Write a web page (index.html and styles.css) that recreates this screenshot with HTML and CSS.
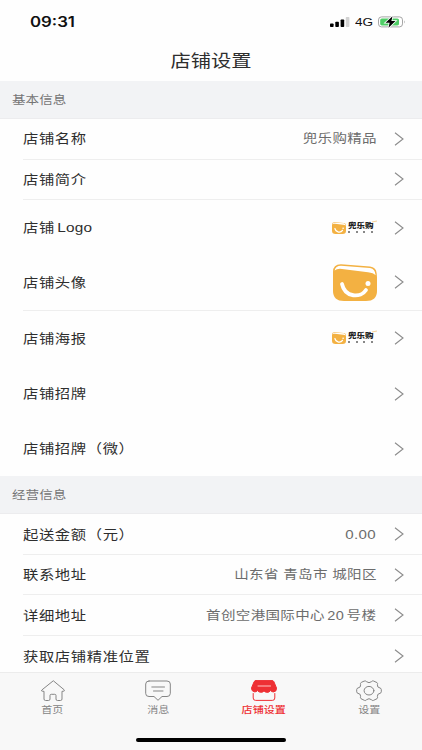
FILE: index.html
```html
<!DOCTYPE html>
<html lang="zh-CN">
<head>
    <meta charset="UTF-8">
    <meta name="viewport" content="width=device-width, initial-scale=1.0">
    <title>店铺设置</title>
    <link rel="stylesheet" href="styles.css">
</head>
<body>
    <!-- 公用图标 -->
    <svg class="defs" width="0" height="0">
        <symbol id="arrow" viewBox="0 0 10 16">
            <path d="M1 1.7 9 8 1 14.3" fill="none" stroke="#8b8b8b" stroke-width="1.1"/>
        </symbol>
        <symbol id="bag" viewBox="0 0 44 37">
            <path d="M8 .3 37 2.6Q43 3.200 43.600 9L44 13V27Q44 37 33 37H11Q0 37 0 27V8Q0 .2 8 .3Z" fill="#f3b142"/>
            <path d="M1.600 6.500Q2.500 1.700 8 1.700L37 3.900Q42.200 4.600 42.600 11.200Q40.500 8.800 35 8.200L9 4.900Q4 4.300 1.600 6.500Z" fill="#fff"/>
            <path d="M9 20C12 34 28 34 33 26" fill="none" stroke="#fff" stroke-width="3.800" stroke-linecap="round"/>
            <circle cx="35" cy="19.500" r="2.500" fill="#fff"/>
        </symbol>
    </svg>

    <div class="page">
        <div class="status">
            <span class="time">09:31</span>
            <div class="status-icons">
                <svg class="signal" width="20" height="10" viewBox="0 0 20 10">
                    <rect x="0" y="6.500" width="3.600" height="3.500" rx=".8"/>
                    <rect x="5.300" y="4.700" width="3.600" height="5.300" rx=".8"/>
                    <rect x="10.600" y="2.500" width="3.600" height="7.500" rx=".8"/>
                    <rect x="15.800" y="0" width="3.600" height="10" rx=".8" fill="#d2d2d2"/>
                </svg>
                <span class="network">4G</span>
                <svg class="battery" width="28" height="12" viewBox="0 0 28 12">
                    <rect x=".5" y=".9" width="24" height="10" rx="3" fill="#fff" stroke="#a5a5a5"/>
                    <rect x="2.200" y="2.400" width="18.800" height="7" rx="1.600" fill="#4fce66"/>
                    <path d="M26 4.200q1.600 1.700 0 3.400z" fill="#a5a5a5"/>
                    <path d="M14.500.2 7.500 6.700h4.100L10.500 11.800 17.500 5.100h-4.100z" fill="#000" stroke="#fff" stroke-width="1.600" paint-order="stroke"/>
                </svg>
            </div>
        </div>
        <header>
            <h1>店铺设置</h1>
        </header>

        <main class="content">
            <h2 class="section"><span>基本信息</span></h2>
            <ul class="list">
                <li class="row line">
                    <span class="label">店铺名称</span>
                    <span class="value">兜乐购精品</span>
                    <svg class="arrow"><use href="#arrow"/></svg>
                </li>
                <li class="row line">
                    <span class="label">店铺简介</span>
                    <svg class="arrow"><use href="#arrow"/></svg>
                </li>
                <li class="row tall">
                    <span class="label">店铺<span class="latin">Logo</span></span>
                    <div class="brand">
                        <svg class="brand-bag"><use href="#bag"/></svg>
                        <div class="brand-text">
                            <b>兜乐购</b>
                            <i></i>
                        </div>
                    </div>
                    <svg class="arrow"><use href="#arrow"/></svg>
                </li>
                <li class="row tall line">
                    <span class="label">店铺头像</span>
                    <svg class="avatar"><use href="#bag"/></svg>
                    <svg class="arrow"><use href="#arrow"/></svg>
                </li>
                <li class="row tall">
                    <span class="label">店铺海报</span>
                    <div class="brand">
                        <svg class="brand-bag"><use href="#bag"/></svg>
                        <div class="brand-text">
                            <b>兜乐购</b>
                            <i></i>
                        </div>
                    </div>
                    <svg class="arrow"><use href="#arrow"/></svg>
                </li>
                <li class="row tall">
                    <span class="label">店铺招牌</span>
                    <svg class="arrow"><use href="#arrow"/></svg>
                </li>
                <li class="row tall">
                    <span class="label">店铺招牌（微）</span>
                    <svg class="arrow"><use href="#arrow"/></svg>
                </li>
            </ul>

            <h2 class="section"><span>经营信息</span></h2>
            <ul class="list">
                <li class="row line">
                    <span class="label">起送金额（元）</span>
                    <span class="value number">0.00</span>
                    <svg class="arrow"><use href="#arrow"/></svg>
                </li>
                <li class="row line">
                    <span class="label">联系地址</span>
                    <span class="value">山东省 青岛市 城阳区</span>
                    <svg class="arrow"><use href="#arrow"/></svg>
                </li>
                <li class="row line">
                    <span class="label">详细地址</span>
                    <span class="value">首创空港国际中心<span class="latin">20</span>号楼</span>
                    <svg class="arrow"><use href="#arrow"/></svg>
                </li>
                <li class="row">
                    <span class="label">获取店铺精准位置</span>
                    <svg class="arrow"><use href="#arrow"/></svg>
                </li>
            </ul>
        </main>

        <nav class="tabbar">
            <a class="tab">
                <svg width="26" height="22" viewBox="0 0 26 22">
                    <path d="M13 1 1.800 10Q1 11.300 2.600 11.300H4V19Q4 20.500 5.600 20.500H8.600Q10 20.500 10 19V15.500Q10 14.300 11.300 14.300H14.700Q16 14.300 16 15.500V19Q16 20.500 17.400 20.500H20.400Q22 20.500 22 19V11.300H23.400Q25 11.300 24.200 10Z"/>
                </svg>
                <span>首页</span>
            </a>
            <a class="tab">
                <svg width="26" height="22" viewBox="0 0 26 22">
                    <path d="M4 1H22Q25.300 1 25.300 4V13.500Q25.300 16.500 22 16.500H17L13 20.300 9 16.500H4Q.7 16.500.7 13.500V4Q.7 1 4 1ZM6.800 7H19.500M8.500 11H18"/>
                </svg>
                <span>消息</span>
            </a>
            <a class="tab active">
                <svg width="26" height="22" viewBox="0 0 26 22">
                    <path class="fill" d="M5 .6H21Q22.300.6 22.900 1.700L25.500 8Q25.700 11.600 22.600 11.900 20.800 12 19.500 10.600 17.800 12.800 16 12.300 14 12.300 13 10.900 11.800 12.500 9.800 12.300 7.800 12.300 6.500 10.600 5.200 12.200 3.200 11.800.5 11.300.5 8L3.100 1.700Q3.700.6 5 .6Z"/>
                    <path d="M7 6H19.500" stroke="#ffc4c4"/>
                    <path d="M2.200 13.500V18Q2.200 20.400 4.600 20.400H21.400Q23.800 20.400 23.800 18V13.500"/>
                </svg>
                <span>店铺设置</span>
            </a>
            <a class="tab">
                <svg width="26" height="22" viewBox="0 0 26 22">
                    <path d="M8.500 1Q10 .6 10.600 1.700 13 3.700 15.400 1.700 16 .6 17.500 1L21 2.600Q22 3.300 21.400 4.600 21 7.600 24 8 25.300 8.300 25.300 9.600V11.800Q25.300 13 24 13.300 21 13.800 21.400 16.600 22 18 21 18.700L17.500 20.400Q16 20.800 15.400 19.700 13 17.700 10.600 19.700 10 20.800 8.500 20.400L5 18.700Q4 18 4.600 16.600 5 13.800 2 13.300.7 13 .7 11.800V9.600Q.7 8.300 2 8 5 7.600 4.600 4.600 4 3.300 5 2.600Z"/>
                    <ellipse cx="13" cy="10.700" rx="4.900" ry="4.300"/>
                </svg>
                <span>设置</span>
            </a>
        </nav>
        <div class="home-bar"></div>
    </div>
</body>
</html>
```
FILE: styles.css
```css
* {
    box-sizing: border-box;
}
body {
    margin: 0;
    font-family: 'Liberation Sans', 'Noto Sans CJK SC', sans-serif;
    background-color: #fefefe;
    color: #2e2e2e;
}
.defs {
    position: absolute;
}
.page {
    height: 750px;
    display: flex;
    flex-direction: column;
    overflow: hidden;
}
.status {
    height: 42px;
    flex-shrink: 0;
    display: flex;
    align-items: center;
    justify-content: space-between;
    padding: 1px 16px 0 30px;
}
.time {
    font-family: Inter, sans-serif;
    font-size: 14px;
    font-weight: 600;
    color: #111;
    transform: scaleX(1.2);
    transform-origin: left;
}
.status-icons {
    display: flex;
    align-items: center;
}
.network {
    width: 18px;
    margin: 0 5px;
    font-family: 'Liberation Sans', sans-serif;
    font-size: 11.5px;
    color: #111;
    transform: scaleX(1.18);
    transform-origin: left;
}
header {
    height: 39px;
    flex-shrink: 0;
    text-align: center;
}
h1 {
    margin: 0;
    font-size: 17.2px;
    font-weight: normal;
    line-height: 38px;
    transform: scaleX(1.18);
}
.content {
    flex: 1;
    min-height: 0;
    overflow: hidden;
}
.section {
    height: 38px;
    margin: 0;
    padding-left: 12px;
    background-color: #f2f3f5;
    border-bottom: 1px solid #ececee;
    font-size: 11.5px;
    font-weight: normal;
    line-height: 38px;
    color: #757575;
}
.section span {
    display: inline-block;
    transform: scaleX(1.18);
    transform-origin: left;
}
.list {
    margin: 0;
    padding: 0;
    list-style: none;
}
.row {
    height: 40.5px;
    margin-left: 23px;
    padding-right: 18px;
    display: flex;
    align-items: center;
}
.row.tall {
    height: 55.3px;
}
.row.line {
    border-bottom: 1px solid #eee;
}
.label {
    margin-right: auto;
    padding-bottom: 2px;
    font-size: 13px;
    letter-spacing: 0.5px;
    white-space: nowrap;
    transform: scaleX(1.18);
    transform-origin: left;
}
.label .latin {
    margin-left: 2px;
    letter-spacing: 0.2px;
}
.value {
    padding-bottom: 1px;
    font-size: 12.3px;
    letter-spacing: 0.3px;
    white-space: nowrap;
    color: #6c6c6c;
    transform: scaleX(1.18);
    transform-origin: right;
}
.value .latin {
    margin: 0 2px;
}
.value.number {
    padding-bottom: 0;
    font-size: 12.8px;
}
.arrow {
    width: 10px;
    height: 16px;
    margin-left: 17.5px;
}
.avatar {
    width: 44px;
    height: 37px;
}
.brand {
    position: relative;
    width: 45px;
    display: flex;
    align-items: center;
}
/* 右上角的小撇 */
.brand::after {
    content: '';
    position: absolute;
    right: 0;
    top: -1px;
    width: 5px;
    height: 1px;
    background-color: #f6d39a;
    transform: rotate(-10deg);
}
.brand-bag {
    width: 14px;
    height: 12px;
}
.brand-text {
    width: 26px;
    margin-left: 2px;
}
.brand-text b {
    display: block;
    font-size: 7.4px;
    font-weight: 900;
    line-height: 7px;
    white-space: nowrap;
    color: #222;
    transform: translateY(-1px) scaleX(1.15);
    transform-origin: left;
}
/* 品牌名下方的小字 */
.brand-text i {
    display: block;
    height: 2px;
    margin-top: 1px;
    background: repeating-linear-gradient(90deg, #888 0 2px, transparent 2px 7.6px);
}
.tabbar {
    height: 78px;
    flex-shrink: 0;
    display: flex;
    padding-top: 7px;
    background-color: #f8f8f8;
    border-top: 1px solid #ececec;
}
.tab {
    flex: 1;
    display: flex;
    flex-direction: column;
    align-items: center;
    font-size: 9.4px;
    color: #858585;
}
.tab svg {
    fill: none;
    stroke: currentColor;
    stroke-width: 1;
    stroke-linejoin: round;
    stroke-linecap: round;
}
.tab .fill {
    fill: currentColor;
}
.tab span {
    line-height: 14px;
    margin-top: 1px;
    transform: scaleX(1.18);
}
.tab.active {
    color: #ee3034;
    font-weight: 500;
}
.home-bar {
    position: absolute;
    left: 136px;
    top: 738px;
    width: 150px;
    height: 4px;
    border-radius: 2px;
    background-color: #000;
}
```
